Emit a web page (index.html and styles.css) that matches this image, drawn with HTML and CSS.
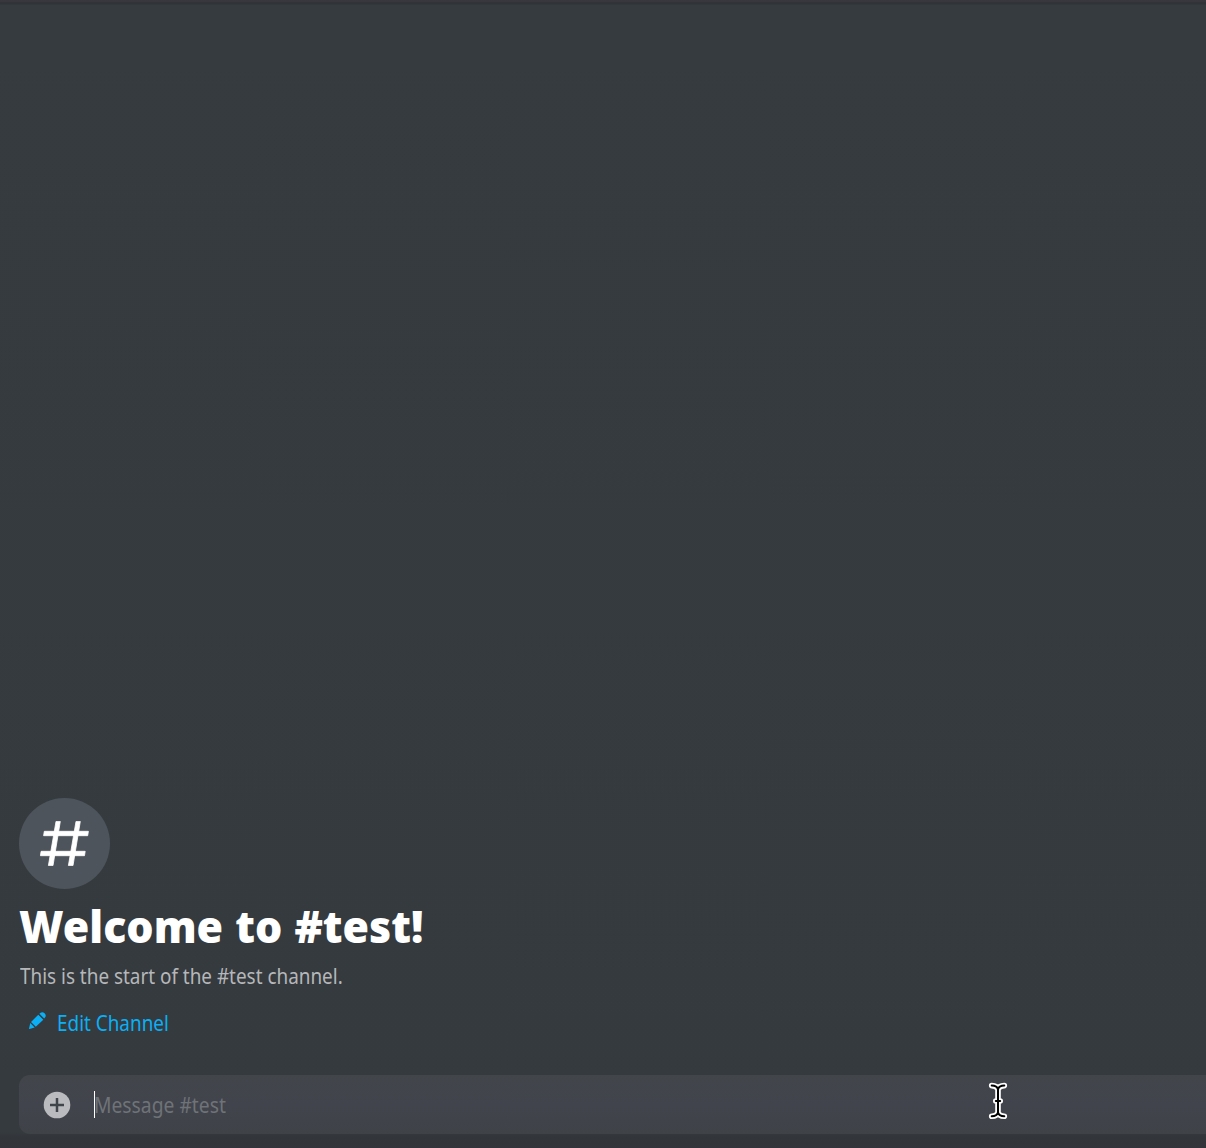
FILE: index.html
```html
<!DOCTYPE html>
<html lang="en">
<head>
<meta charset="utf-8">
<title>#test</title>
<link rel="stylesheet" href="styles.css">
</head>
<body>
<main class="chat">
  <section class="intro">
    <div class="channel-icon">
      <svg width="49" height="45" viewBox="0 0 49 45" fill="#fff" stroke="#fff" stroke-width=".8" stroke-linejoin="round"><path d="M16 .4H20.3L13 44.6H8.4ZM36 .4H40.3L33 44.6H28.4ZM4.3 10.3H48.4L47.7 14.7H3.6ZM1.1 30.3H45.2L44.5 34.7H.4Z"/></svg>
    </div>
    <h1 class="title">Welcome to #test!</h1>
    <p class="description">This is the start of the #test channel.</p>
    <a class="edit">
      <svg class="pencil" width="17" height="17" viewBox="0 0 17 17" fill="#0aaff5"><path d="M9.3 2.7 14.3 7.7 6.8 14.8 2 10ZM10.4 1.7 11.6.7C12.8-.2 14.5.1 15.6 1.3 16.9 2.5 17.1 4.1 16.2 5.3L15.2 6.5ZM1.3 11.1 5.7 15.6.4 17C.1 17-.1 16.8 0 16.5Z"/></svg>
      <span class="edit-label">Edit Channel</span>
    </a>
  </section>
  <div class="composer">
    <svg class="attach" width="28" height="28" viewBox="0 0 28 28"><circle cx="14" cy="14" r="13.3" fill="#b9bbbe"/><path d="M14 7V21M7 14H21" stroke="#40444b" stroke-width="2.5"/></svg>
    <span class="caret"></span>
    <span class="placeholder">Message #test</span>
    <svg class="pointer" width="20" height="38" viewBox="0 0 20 38" fill="none" stroke-linecap="round" stroke-linejoin="round"><path d="M3.7 3.6Q9 3.6 10 7.5Q11 3.6 16.3 3.6M10 7V31M7.8 19H12.2M3.7 34.2Q9 34.2 10 30.5Q11 34.2 16.3 34.2" stroke="#fff" stroke-width="5.6"/><path d="M3.7 3.6Q9 3.6 10 7.5Q11 3.6 16.3 3.6M10 7V31M7.8 19H12.2M3.7 34.2Q9 34.2 10 30.5Q11 34.2 16.3 34.2" stroke="#000" stroke-width="2"/></svg>
  </div>
</main>
</body>
</html>
```
FILE: styles.css
```css
body {
  margin: 0;
  background: #363a3e;
  font-family: "Noto Sans", "Open Sans", sans-serif;
}
.chat {
  box-sizing: border-box;
  height: 1148px;
  overflow: hidden;
  display: flex;
  flex-direction: column;
  justify-content: flex-end;
  padding: 0 0 14px 19px;
  background: linear-gradient(#38383e 0, #37373d 2px, #303338 2px, #303338 4px, #353b3e 5px, #353a3e 1132px, #323539 1138px, #34333b 1148px);
}
.intro {
  display: flex;
  flex-direction: column;
  align-items: flex-start;
}
.channel-icon {
  width: 91px;
  height: 91px;
  border-radius: 50%;
  background: #4e545c;
  display: flex;
  align-items: center;
  justify-content: center;
}
.channel-icon svg {
  margin: 0 1px 1px 0;
}
.title,
.description,
.edit-label,
.placeholder {
  transform-origin: left center;
  white-space: nowrap;
}
.title {
  margin: 7px 0 0;
  font-size: 45px;
  line-height: 60px;
  font-weight: 900;
  word-spacing: 1px;
  color: #fff;
  transform: scaleX(.954);
}
.description {
  margin: 5px 0 0 1px;
  font-size: 21px;
  line-height: 30px;
  color: #b5b7ba;
  transform: scaleX(.9);
}
.edit {
  display: flex;
  align-items: center;
  margin: 17px 0 0 10px;
  height: 30px;
  gap: 11px;
  color: #0aaff5;
}
.pencil {
  margin-top: -6px;
}
.edit-label {
  font-size: 21px;
  line-height: 30px;
  transform: scaleX(.9);
}
.composer {
  position: relative;
  display: flex;
  align-items: center;
  height: 59px;
  margin-top: 37px;
  padding-left: 24px;
  border-radius: 11px 0 0 11px;
  background: linear-gradient(#42464b, #41444c 50%, #3f4348);
}
.caret {
  width: 1px;
  height: 27px;
  margin-left: 23px;
  background: #fff;
}
.placeholder {
  margin-left: -1px;
  font-size: 21px;
  line-height: 30px;
  color: #6f7378;
  transform: scaleX(.918);
}
.pointer {
  position: absolute;
  left: 969px;
  top: 7px;
}
```
